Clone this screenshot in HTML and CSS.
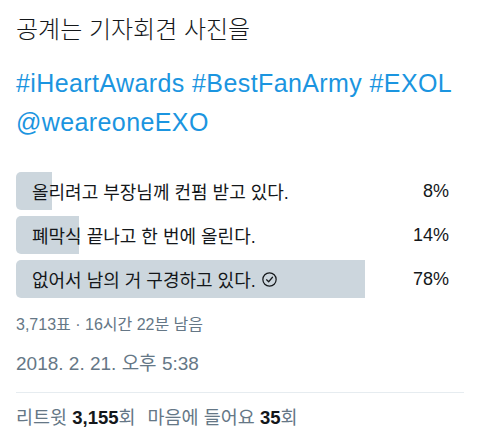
FILE: index.html
```html
<!DOCTYPE html>
<html lang="ko">
<head>
<meta charset="utf-8">
<link rel="stylesheet" href="styles.css">
</head>
<body>
<div class="tweet">
  <p class="title">공계는 기자회견 사진을</p>
  <p class="tags"><span class="link">#iHeartAwards</span> <span class="link">#BestFanArmy</span> <span class="link">#EXOL</span><br><span class="link">@weareoneEXO</span></p>
  <div class="poll">
    <div class="option">
      <div class="bar" style="width: 8%"></div>
      <span class="label">올리려고 부장님께 컨펌 받고 있다.</span>
      <span class="pct">8%</span>
    </div>
    <div class="option">
      <div class="bar" style="width: 14%"></div>
      <span class="label">폐막식 끝나고 한 번에 올린다.</span>
      <span class="pct">14%</span>
    </div>
    <div class="option">
      <div class="bar" style="width: 78%"></div>
      <span class="label">없어서 남의 거 구경하고 있다. <svg class="check" width="15" height="15" viewBox="0 0 16 16"><circle cx="8" cy="8" r="7.1" fill="none" stroke="#14171a" stroke-width="1.3"/><path d="M4.9 8.3 L7.1 10.4 L11.2 5.6" fill="none" stroke="#14171a" stroke-width="1.3" stroke-linecap="round" stroke-linejoin="round"/></svg></span>
      <span class="pct">78%</span>
    </div>
  </div>
  <p class="meta">3,713표 · 16시간 22분 남음</p>
  <p class="date">2018. 2. 21. 오후 5:38</p>
  <div class="stats"><span>리트윗 <b>3,155</b>회</span><span>마음에 들어요 <b>35</b>회</span></div>
</div>
</body>
</html>
```
FILE: styles.css
```css
html, body {
  margin: 0;
  padding: 0;
  background: #ffffff;
}
body {
  font-family: "Liberation Sans", "Noto Sans CJK KR", sans-serif;
  color: #14171a;
}
.tweet {
  padding: 12px 16px 0 16px;
}
p {
  margin: 0;
}
.title {
  font-size: 24px;
  line-height: 36px;
  font-weight: 300;
}
.tags {
  margin-top: 16px;
  font-size: 25px;
  letter-spacing: 0.4px;
  line-height: 39px;
}
.link {
  color: #1b95e0;
}
.poll {
  margin-top: 30px;
  display: flex;
  flex-direction: column;
  gap: 6px;
}
.option {
  position: relative;
  height: 38px;
  display: flex;
  align-items: center;
  justify-content: space-between;
  font-size: 18px;
  padding: 0 15px 0 16px;
  width: 448px;
  box-sizing: border-box;
}
.bar {
  position: absolute;
  left: 0;
  top: 0;
  bottom: 0;
  background: #ccd6dd;
  border-radius: 5px 0 0 5px;
}
.label, .pct {
  position: relative;
}
.label {
  display: flex;
  align-items: center;
  gap: 6px;
}
.check {
  display: block;
}
.meta {
  margin-top: 15px;
  font-size: 16px;
  line-height: 24px;
  color: #657786;
}
.date {
  margin-top: 14px;
  font-size: 19px;
  line-height: 26px;
  color: #657786;
}
.stats {
  margin-top: 15px;
  border-top: 1px solid #e6ecf0;
  padding-top: 12px;
  display: flex;
  gap: 12px;
  font-size: 18.5px;
  line-height: 26px;
  color: #657786;
}
.stats b {
  color: #14171a;
  font-weight: bold;
}
```
